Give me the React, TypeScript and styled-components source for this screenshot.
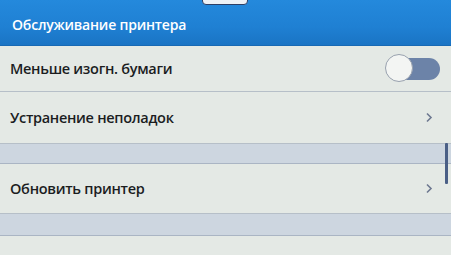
import React from "react";
import styled, { createGlobalStyle } from "styled-components";

const GlobalStyle = createGlobalStyle`
  html, body {
    margin: 0;
    padding: 0;
    background: #e4e9e5;
  }
  body {
    font-family: "Open Sans", "Noto Sans", sans-serif;
  }
`;

const Screen = styled.div`
  position: relative;
  width: 451px;
  height: 255px;
  overflow: hidden;
  background: #e4e9e5;
`;

const Header = styled.div`
  position: relative;
  height: 46px;
  display: flex;
  align-items: center;
  padding: 4px 12px 0;
  box-sizing: border-box;
  background: linear-gradient(180deg, #2489dc 0%, #1f80d3 60%, #1a74c4 100%);
  border-bottom: 1px solid #1769b4;
`;

const Tab = styled.div`
  position: absolute;
  top: -6px;
  left: 202px;
  width: 46px;
  height: 11px;
  box-sizing: border-box;
  border: 1.5px solid #2d3f66;
  border-radius: 0 0 4px 4px;
  background: #eef2f6;
`;

const Title = styled.h1`
  margin: 0;
  color: #ffffff;
  font-size: 14px;
  font-weight: 600;
  letter-spacing: -0.2px;
`;

const Row = styled.div<{ $h: number }>`
  height: ${(p) => p.$h}px;
  display: flex;
  align-items: center;
  justify-content: space-between;
  padding: 0 18px 0 10px;
  box-sizing: border-box;
  border-bottom: 1px solid #b6bfc8;
`;

const Label = styled.span`
  color: #1b1d1f;
  font-size: 14.5px;
  font-weight: 600;
  letter-spacing: -0.3px;
`;

const Band = styled.div<{ $h: number }>`
  height: ${(p) => p.$h}px;
  background: #cdd6e0;
  border-bottom: 1px solid #aab5c4;
  box-sizing: border-box;
`;

const Toggle = styled.div`
  position: relative;
  width: 54px;
  height: 22px;
  margin-right: -7px;
  border-radius: 11px;
  background: #6c83a8;
`;

const Knob = styled.div`
  position: absolute;
  left: -1px;
  top: -4px;
  width: 28px;
  height: 28px;
  box-sizing: border-box;
  border-radius: 50%;
  border: 1.5px solid #98a1ae;
  background: #f3f5f3;
`;

const Chevron = () => (
  <svg width="8" height="11" viewBox="0 0 8 11">
    <path d="M2 1.5 L6 5.5 L2 9.5" fill="none" stroke="#6d7890" strokeWidth="1.6" />
  </svg>
);

const ScrollBar = styled.div`
  position: absolute;
  right: 3px;
  top: 143px;
  width: 3px;
  height: 41px;
  border-radius: 1px;
  background: #4a5f86;
`;

export default function App() {
  return (
    <Screen>
      <GlobalStyle />
      <Header>
        <Tab />
        <Title>Обслуживание принтера</Title>
      </Header>
      <Row $h={46}>
        <Label>Меньше изогн. бумаги</Label>
        <Toggle>
          <Knob />
        </Toggle>
      </Row>
      <Row $h={52}>
        <Label>Устранение неполадок</Label>
        <Chevron />
      </Row>
      <Band $h={20} />
      <Row $h={50}>
        <Label>Обновить принтер</Label>
        <Chevron />
      </Row>
      <Band $h={22} />
      <ScrollBar />
    </Screen>
  );
}
